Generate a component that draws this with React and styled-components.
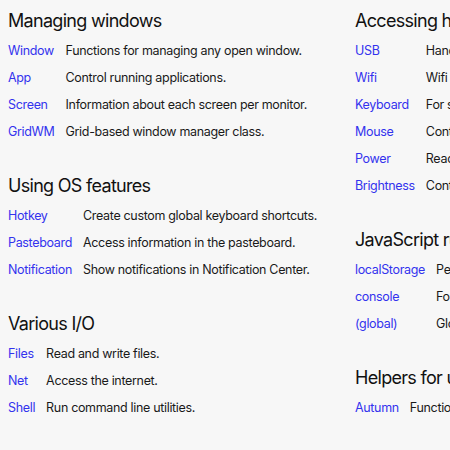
import styled, { createGlobalStyle } from "styled-components";

const GlobalStyle = createGlobalStyle`
  html, body {
    margin: 0;
    padding: 0;
    background: #f7f7f7;
    overflow: hidden;
  }
  body {
    font-family: Inter, "Noto Sans", sans-serif;
    color: #111;
  }
`;

const columns = [
  [
    {
      title: "Managing windows",
      items: [
        ["Window", "Functions for managing any open window."],
        ["App", "Control running applications."],
        ["Screen", "Information about each screen per monitor."],
        ["GridWM", "Grid-based window manager class."],
      ],
    },
    {
      title: "Using OS features",
      items: [
        ["Hotkey", "Create custom global keyboard shortcuts."],
        ["Pasteboard", "Access information in the pasteboard."],
        ["Notification", "Show notifications in Notification Center."],
      ],
    },
    {
      title: "Various I/O",
      items: [
        ["Files", "Read and write files."],
        ["Net", "Access the internet."],
        ["Shell", "Run command line utilities."],
      ],
    },
  ],
  [
    {
      title: "Accessing hardware",
      items: [
        ["USB", "Handle USB device events."],
        ["Wifi", "Wifi network information."],
        ["Keyboard", "For simulating keyboard events."],
        ["Mouse", "Control the mouse cursor."],
        ["Power", "Read battery and power state."],
        ["Brightness", "Control the screen brightness."],
      ],
    },
    {
      title: "JavaScript runtime",
      items: [
        ["localStorage", "Persistent key-value storage."],
        ["console", "For logging messages."],
        ["(global)", "Global functions and values."],
      ],
    },
    {
      title: "Helpers for users",
      items: [["Autumn", "Functions for the app itself."]],
    },
  ],
];

export default function App() {
  return (
    <>
      <GlobalStyle />
      <Page>
        {columns.map((col, i) => (
          <Column key={i}>
            {col.map((section) => (
              <Section key={section.title}>
                <Heading>{section.title}</Heading>
                <Table>
                  <tbody>
                    {section.items.map(([name, desc]) => (
                      <tr key={name}>
                        <NameCell>
                          <Link href="#">{name}</Link>
                        </NameCell>
                        <DescCell>{desc}</DescCell>
                      </tr>
                    ))}
                  </tbody>
                </Table>
              </Section>
            ))}
          </Column>
        ))}
      </Page>
    </>
  );
}

const Page = styled.div`
  display: flex;
  padding: 9px 0 0 8px;
  width: 900px;
`;

const Column = styled.div`
  display: flex;
  flex-direction: column;
  gap: 29.5px;
  width: 347px;
  flex-shrink: 0;
`;

const Section = styled.section`
  display: flex;
  flex-direction: column;
  align-items: flex-start;
  gap: 3.5px;
`;

const Heading = styled.h2`
  margin: 0;
  font-size: 18px;
  line-height: 24px;
  font-weight: 400;
  letter-spacing: -0.7px;
  color: #111;
  white-space: nowrap;
`;

const Table = styled.table`
  border-collapse: collapse;
  font-size: 12.5px;
  letter-spacing: -0.33px;
`;

const NameCell = styled.td`
  height: 27px;
  padding: 0 11px 0 0;
  white-space: nowrap;
`;

const DescCell = styled.td`
  height: 27px;
  padding: 0;
  white-space: nowrap;
  color: #1a1a1a;
`;

const Link = styled.a`
  color: #3333ee;
  text-decoration: none;
`;
